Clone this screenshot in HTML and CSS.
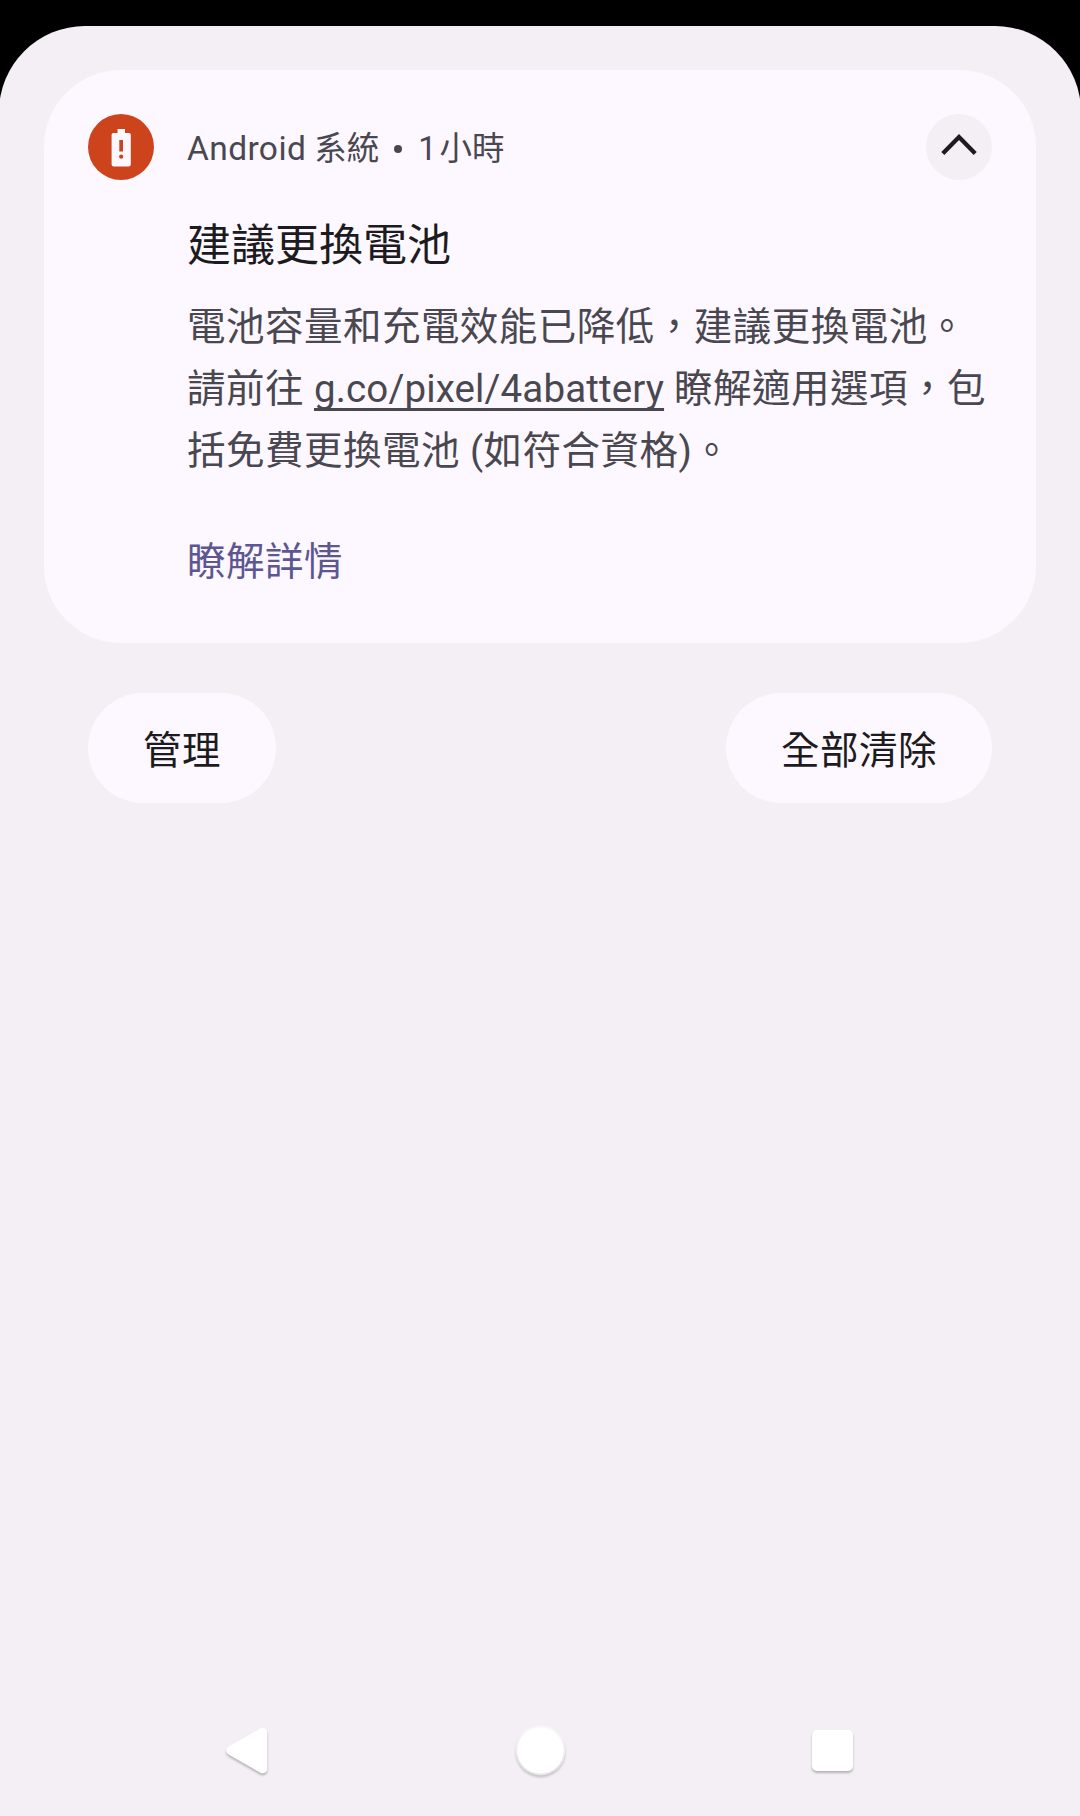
FILE: index.html
```html
<!DOCTYPE html>
<html lang="zh-Hant-TW">
<head>
    <meta charset="UTF-8">
    <meta name="viewport" content="width=device-width, initial-scale=1.0">
    <title>通知</title>
    <link rel="stylesheet" href="styles.css">
</head>
<body>

    <main class="shade">
        <section class="card">
            <div class="app-icon">
                <svg width="66" height="66" viewBox="0 0 66 66">
                    <path fill="#fdf8ff" fill-rule="evenodd" d="M29.500 15h7.500v4h4q1.800 0 1.800 1.800v29.800q0 1.800-1.800 1.800h-15.600q-1.800 0-1.800-1.800v-29.800q0-1.800 1.800-1.800h4.100zM31.300 26v11.500h3.700v-11.500z"/>
                    <circle cx="33.200" cy="42.700" r="2.100" fill="#cd441c"/>
                </svg>
            </div>

            <div class="content">
                <div class="header">
                    <span class="app-name"><span class="latin">Android</span> 系統</span>
                    <span class="dot"></span>
                    <span class="time"><span>1</span><span>小時</span></span>
                </div>
                <h1>建議更換電池</h1>
                <p class="message">電池容量和充電效能已降低，建議更換電池。<br>請前往 <a class="link" href="#">g.co/pixel/4abattery</a> 瞭解適用選項，包<br>括免費更換電池 (如符合資格)。</p>
                <a class="action" href="#">瞭解詳情</a>
            </div>

            <button class="collapse" aria-label="收合">
                <svg width="66" height="66" viewBox="0 0 66 66">
                    <path d="M16.800 39.500L33 23L49.200 39.500" fill="none" stroke="#1c1b20" stroke-width="4.300"/>
                </svg>
            </button>
        </section>

        <div class="footer">
            <button class="pill">管理</button>
            <button class="pill">全部清除</button>
        </div>

        <nav class="nav">
            <svg class="nav-icon" width="60" height="60" viewBox="0 0 60 60">
                <path d="M11 30L46 10V50Z" fill="#fff" stroke="#fff" stroke-width="10" stroke-linejoin="round" transform="translate(2.800 3.300) scale(.91)"/>
            </svg>
            <svg class="nav-icon" width="60" height="60" viewBox="0 0 60 60">
                <circle cx="30.500" cy="30.500" r="25" fill="#fff" fill-opacity=".6"/>
                <circle cx="30.500" cy="30.500" r="23.300" fill="#fff"/>
            </svg>
            <svg class="nav-icon" width="60" height="60" viewBox="0 0 60 60">
                <rect x="10" y="10" width="41" height="41" rx="5" fill="#fff"/>
            </svg>
        </nav>
    </main>

</body>
</html>
```

FILE: styles.css
```css
* {
    box-sizing: border-box;
}
body {
    margin: 0;
    padding-top: 26px;
    height: 1816px;
    background-color: #000;
    color: #1c1b20;
    font-family: Roboto, "Noto Sans CJK TC", sans-serif;
    overflow: hidden;
}
button {
    border: none;
    padding: 0;
    font-family: inherit;
    color: inherit;
    cursor: pointer;
}
svg {
    display: block;
}
.shade {
    display: flex;
    flex-direction: column;
    height: 100%;
    margin: 0 -1px;
    padding: 44px 45px 36px;
    background-color: #f3eff4;
    border-radius: 86px;
    border-bottom-left-radius: 0;
    border-bottom-right-radius: 0;
}
.card {
    display: flex;
    height: 572.500px;
    padding: 44px 44px 0;
    background-color: #fdf8ff;
    border-radius: 77px;
}
.app-icon,
.collapse {
    flex: none;
    width: 66px;
    height: 66px;
    border-radius: 50%;
}
.app-icon {
    background-color: #cd441c;
}
.collapse {
    background-color: #f3eff4;
}
.content {
    flex: 1;
    min-width: 0;
    margin-left: 33px;
    white-space: nowrap;
}
.header {
    display: flex;
    align-items: center;
    height: 66px;
    padding-top: 3px;
    font-size: 32.500px;
    line-height: 40px;
    color: #49474f;
}
.latin {
    font-size: 33.500px;
    letter-spacing: 0.400px;
}
.dot {
    width: 8px;
    height: 8px;
    margin: 0 16px 0 15px;
    border-radius: 50%;
    background-color: #49474f;
}
.time {
    display: flex;
    gap: 3px;
}
h1 {
    margin: 36px 0 0;
    font-size: 44px;
    font-weight: 400;
    line-height: 60px;
}
.message {
    margin: 20px 0 0;
    font-size: 38.500px;
    line-height: 62px;
    letter-spacing: 0.480px;
    color: #49474f;
}
.link {
    color: inherit;
    letter-spacing: 0.130px;
    text-decoration-thickness: 3px;
    text-underline-offset: 6px;
    text-decoration-skip-ink: none;
}
.action {
    display: inline-block;
    margin-top: 50px;
    font-size: 38.500px;
    line-height: 60px;
    letter-spacing: 0.480px;
    color: #5d5791;
    text-decoration: none;
}
.footer {
    display: flex;
    justify-content: space-between;
    margin-top: 50.500px;
    padding: 0 44px;
}
.pill {
    height: 110px;
    padding: 0 55px 2px;
    border-radius: 55px;
    background-color: #fdf8ff;
    font-size: 38.500px;
    letter-spacing: 0.480px;
}
.nav {
    display: flex;
    justify-content: space-between;
    margin-top: auto;
    padding: 0 174px;
}
.nav-icon {
    filter: drop-shadow(0 2px 1px rgba(0, 0, 0, 0.25));
}
```
